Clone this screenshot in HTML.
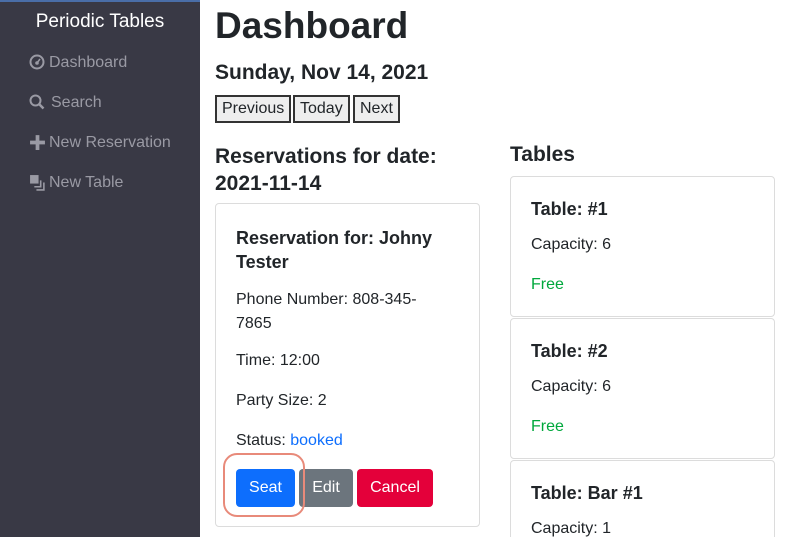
<!DOCTYPE html><html style="overflow:hidden;height:537px"><head><style>
body{margin:0;width:790px;height:537px;overflow:hidden;font-family:"Liberation Sans",sans-serif;color:#212529;background:#fff;position:relative}
.a{position:absolute}
.side{left:0;top:0;width:200px;height:537px;background:#393945;border-top:2px solid #4a6ea8;box-sizing:border-box}
.nav{color:#9a9aa4;font-size:16px}
.card{border:1px solid #dcdcdc;border-radius:4px;box-sizing:border-box}
.b{border:2px solid #333;background:#eee;font-size:16px;padding:0 5px;height:28px;line-height:24px;box-sizing:border-box}
.btn{color:#fff;font-size:16px;border-radius:4px;height:38px;line-height:38px;text-align:center}
.h{font-weight:bold}
</style></head><body>
<div class="a side"></div>
<div class="a" style="left:0;width:200px;top:11px;text-align:center;color:#fff;font-size:19px">Periodic Tables</div>
<svg class="a" style="left:29px;top:54px" width="16" height="16" viewBox="0 0 16 16"><circle cx="8" cy="8" r="6.5" fill="none" stroke="#9a9aa4" stroke-width="2"/><circle cx="8" cy="9" r="1.8" fill="#9a9aa4"/><path d="M8 9L11 5" stroke="#9a9aa4" stroke-width="1.5"/></svg>
<div class="a nav" style="left:49px;top:54px">Dashboard</div>
<svg class="a" style="left:29px;top:94px" width="16" height="16" viewBox="0 0 16 16"><circle cx="6.5" cy="6.5" r="5" fill="none" stroke="#9a9aa4" stroke-width="2"/><path d="M10 10L14.5 14.5" stroke="#9a9aa4" stroke-width="2.5"/></svg>
<div class="a nav" style="left:51px;top:94px">Search</div>
<svg class="a" style="left:29px;top:134px" width="17" height="17" viewBox="0 0 16 16"><path d="M8 1V15M1 8H15" stroke="#9a9aa4" stroke-width="3.5"/></svg>
<div class="a nav" style="left:49px;top:134px">New Reservation</div>
<svg class="a" style="left:29px;top:174px" width="17" height="17" viewBox="0 0 16 16"><rect x="1" y="1" width="8" height="8" fill="#9a9aa4"/><path d="M11 6V12H5M14 8V15H7" stroke="#9a9aa4" stroke-width="1.5" fill="none"/></svg>
<div class="a nav" style="left:49px;top:174px">New Table</div>

<div class="a h" style="left:215px;top:5px;font-size:37px">Dashboard</div>
<div class="a h" style="left:215px;top:61px;font-size:21px">Sunday, Nov 14, 2021</div>
<div class="a b" style="left:215px;top:95px">Previous</div>
<div class="a b" style="left:293px;top:95px">Today</div>
<div class="a b" style="left:353px;top:95px">Next</div>
<div class="a h" style="left:215px;top:143px;font-size:21px;line-height:27px">Reservations for date:<br>2021-11-14</div>
<div class="a h" style="left:510px;top:143px;font-size:21px">Tables</div>

<div class="a card" style="left:215px;top:203px;width:265px;height:324px"></div>
<div class="a h" style="left:236px;top:226px;font-size:18px;line-height:24px;width:220px">Reservation for: Johny Tester</div>
<div class="a" style="left:236px;top:288px;font-size:16px;line-height:24px;width:200px">Phone Number: 808-345-7865</div>
<div class="a" style="left:236px;top:352px;font-size:16px">Time: 12:00</div>
<div class="a" style="left:236px;top:392px;font-size:16px">Party Size: 2</div>
<div class="a" style="left:236px;top:432px;font-size:16px">Status: <span style="color:#0d6efd">booked</span></div>
<div class="a btn" style="left:236px;top:469px;width:59px;background:#0d6efd">Seat</div>
<div class="a btn" style="left:299px;top:469px;width:54px;background:#6c757d">Edit</div>
<div class="a btn" style="left:357px;top:469px;width:76px;background:#e4003a">Cancel</div>
<div class="a" style="left:223px;top:453px;width:82px;height:64px;border:2px solid #e88a7a;border-radius:14px;box-sizing:border-box"></div>

<div class="a card" style="left:510px;top:176px;width:265px;height:141px"></div>
<div class="a h" style="left:531px;top:199px;font-size:18px">Table: #1</div>
<div class="a" style="left:531px;top:236px;font-size:16px">Capacity: 6</div>
<div class="a" style="left:531px;top:276px;font-size:16px;color:#00a83c">Free</div>
<div class="a card" style="left:510px;top:318px;width:265px;height:141px"></div>
<div class="a h" style="left:531px;top:341px;font-size:18px">Table: #2</div>
<div class="a" style="left:531px;top:378px;font-size:16px">Capacity: 6</div>
<div class="a" style="left:531px;top:418px;font-size:16px;color:#00a83c">Free</div>
<div class="a card" style="left:510px;top:460px;width:265px;height:100px"></div>
<div class="a h" style="left:531px;top:483px;font-size:18px">Table: Bar #1</div>
<div class="a" style="left:531px;top:520px;font-size:16px">Capacity: 1</div>
</body></html>
